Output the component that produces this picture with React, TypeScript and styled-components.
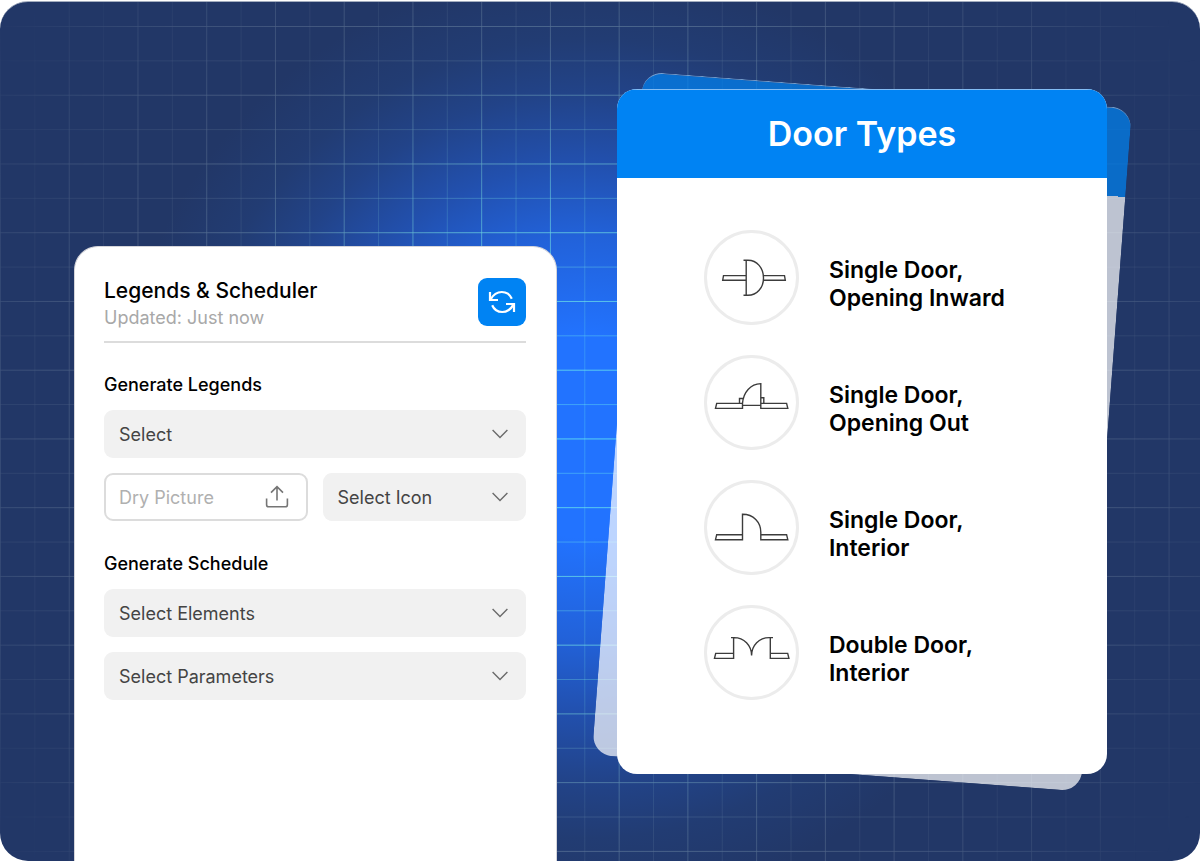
import React from "react";
import styled, { createGlobalStyle } from "styled-components";

const Global = createGlobalStyle`
  *, *::before, *::after { box-sizing: border-box; }
  body { margin: 0; background: #fff; font-family: Inter, "Liberation Sans", sans-serif; color: #000; }
  h1, h2, h3, p, ul { margin: 0; padding: 0; }
  #root { display: flow-root; }
`;

const Scene = styled.main`
  position: relative;
  margin-top: 1px;
  min-height: calc(100vh - 1px);
  overflow: hidden;
  border-radius: 28px;
  border-top: 1px solid #a3adbf;
  background: radial-gradient(
    circle at 585px 436px,
    #2273ff 0,
    #2273ff 100px,
    #2262da 200px,
    #2250ae 275px,
    #224388 345px,
    #223c73 400px,
    #223767 470px
  );
  display: grid;
  grid-template-columns: 483fr 490fr;
  column-gap: 60px;
  padding: 0 93px 0 74px;
`;

const GridLines = styled.svg`
  position: absolute;
  inset: 0;
  width: 100%;
  height: 100%;
`;

const Panel = styled.section`
  position: relative;
  margin-top: 244px;
  padding: 31px 30px 30px 29px;
  background: #fff;
  border: 1px solid #d5d5da;
  border-bottom: 0;
  border-radius: 24px 24px 0 0;
`;

const PanelHeader = styled.header`
  display: flex;
  justify-content: space-between;
  height: 65px;
  margin-bottom: -1px;
  border-bottom: 2px solid #dcdcdc;
`;

const PanelTitle = styled.h2`
  font-size: 21px;
  font-weight: 500;
  line-height: 25px;
`;

const Updated = styled.p`
  font-size: 18px;
  line-height: 29px;
  color: #a8a8a8;
`;

const RefreshButton = styled.button`
  width: 48px;
  height: 48px;
  padding: 0;
  border: 0;
  border-radius: 9px;
  background: #0083f3;
  display: grid;
  place-items: center;
`;

const Group = styled.section`
  margin-top: 31px;
  display: grid;
  grid-template-columns: 1fr 1fr;
  gap: 15px;
`;

const GroupTitle = styled.h3`
  grid-column: 1 / -1;
  font-size: 18px;
  font-weight: 500;
  line-height: 24px;
  && { margin-bottom: -2px; }
`;

const Field = styled.div<{ $wide?: boolean }>`
  position: relative;
  height: 48px;
  grid-column: ${(p) => (p.$wide ? "1 / -1" : "auto")};
  svg { position: absolute; right: 18px; top: 19px; pointer-events: none; }
`;

const Select = styled.select`
  appearance: none;
  width: 100%;
  height: 100%;
  padding: 0 48px 0 15px;
  border: 0;
  border-radius: 9px;
  background: #f1f1f1;
  font: 400 18px Inter, sans-serif;
  color: #444;
`;

const Upload = styled.button`
  height: 48px;
  padding: 0 17px 0 13px;
  display: flex;
  align-items: center;
  justify-content: space-between;
  border: 2px solid #dcdcdc;
  border-radius: 9px;
  background: #fff;
  font: 400 18px Inter, sans-serif;
  color: #b0b0b0;
`;

const Stack = styled.div`
  position: relative;
  align-self: start;
  margin-top: 87px;
`;

const BackCard = styled.div`
  position: absolute;
  inset: 0;
  border-radius: 20px;
  transform: rotate(4.3deg);
  opacity: 0.7;
  background: linear-gradient(#0083f3 88px, #fff 88px);
  border-top: 1px solid #9bcbf6;
`;

const Card = styled.section`
  position: relative;
  padding-bottom: 69px;
  border-radius: 20px;
  overflow: hidden;
  background: #fff;
`;

const CardTitle = styled.h1`
  height: 89px;
  border-top: 1px solid #83bdf5;
  background: #0083f3;
  color: #fff;
  font-size: 34px;
  font-weight: 600;
  line-height: 88px;
  text-align: center;
`;

const DoorList = styled.ul`
  list-style: none;
  && { padding: 52px 20px 5px 87px; }
  display: grid;
  gap: 30px;
`;

const Door = styled.li`
  display: flex;
  align-items: center;
  gap: 30px;
  height: 95px;
`;

const DoorIcon = styled.svg`
  flex: none;
  width: 95px;
  height: 95px;
  border: 3px solid #ececec;
  border-radius: 50%;
  fill: none;
  stroke: #3c3c3c;
  stroke-width: 1.4;
`;

const DoorName = styled.p`
  && { padding-top: 13px; }
  font-size: 23px;
  font-weight: 600;
  line-height: 28px;
`;

const PITCH = 34.37;

function BackgroundGrid() {
  return (
    <GridLines aria-hidden="true">
      <defs>
        <radialGradient id="fade" gradientUnits="userSpaceOnUse" cx="585" cy="434" r="720">
          <stop offset="0" stopColor="#fff" />
          <stop offset="0.3" stopColor="#fff" stopOpacity="0.85" />
          <stop offset="0.5" stopColor="#fff" stopOpacity="0.45" />
          <stop offset="0.8" stopColor="#fff" stopOpacity="0.24" />
          <stop offset="1" stopColor="#fff" stopOpacity="0" />
        </radialGradient>
        <radialGradient id="ink" gradientUnits="userSpaceOnUse" cx="585" cy="434" r="500">
          <stop offset="0" stopColor="#6af0f0" />
          <stop offset="0.5" stopColor="#7be6e0" />
          <stop offset="0.8" stopColor="#a4c4cc" />
          <stop offset="1" stopColor="#a9bcc8" />
        </radialGradient>
        <mask id="glow" maskUnits="userSpaceOnUse" x="0" y="0" width="4000" height="4000">
          <rect width="4000" height="4000" fill="url(#fade)" />
        </mask>
      </defs>
      <g stroke="url(#ink)" strokeWidth="1" mask="url(#glow)">
        {Array.from({ length: 70 }, (_, i) => (
          <line key={`v${i}`} x1={0.5 + i * PITCH} x2={0.5 + i * PITCH} y1="0" y2="3000" opacity={i % 2 ? 0.28 : 0.66} />
        ))}
        {Array.from({ length: 70 }, (_, i) => (
          <line key={`h${i}`} x1="0" x2="3000" y1={24.5 + i * PITCH} y2={24.5 + i * PITCH} opacity={i % 2 ? 0.4 : 0.76} />
        ))}
      </g>
    </GridLines>
  );
}

function Dropdown({ label, wide }: { label: string; wide?: boolean }) {
  return (
    <Field $wide={wide}>
      <Select aria-label={label}>
        <option>{label}</option>
      </Select>
      <svg width="16" height="10" viewBox="0 0 16 10" fill="none" stroke="#6b6b6b" strokeWidth="1.4">
        <path d="M.6 1 8 8.6 15.4 1" />
      </svg>
    </Field>
  );
}

const doors = [
  {
    name: ["Single Door,", "Opening Inward"],
    art: (
      <path d="M37.5 27.2H42c9 0 15.5 8 15.5 17.7S51 62.3 42 62.3h-4.5M40.2 27.2v35.1M40.2 42.6H17.5l-.8 4.6h23.5M57.5 42.6h21l.8 4.6H57.5" />
    ),
  },
  {
    name: ["Single Door,", "Opening Out"],
    art: (
      <path d="M36.5 45.4H10.7l-1.2 5h27Zm18.3 0h25.8l1.2 5h-27ZM36.5 45.4c.8-11 8-19.6 18.3-19.8v19.8M36.5 47.4h18.3M36.5 45.4h-3V40.5h4M54.8 39.8h3v5.1" />
    ),
  },
  {
    name: ["Single Door,", "Interior"],
    art: (
      <path d="M36.5 51.7H10.7l-1.2 5h27V31.3c11 0 18.3 8 18.3 18v7.4h27l-1.2-5H54.8" />
    ),
  },
  {
    name: ["Double Door,", "Interior"],
    art: (
      <path d="M27.6 45.4H9.7l-1.2 5h19.1V29.8M25 29.6h3c10 0 17.6 8 17.6 18 0-10 7.6-18 17.6-18H67M64.3 29.8v20.6h18.6l-1.2-5H64.3" />
    ),
  },
];

export default function App() {
  return (
    <>
      <Global />
      <Scene>
        <BackgroundGrid />
        <Panel>
          <PanelHeader>
            <div>
              <PanelTitle>Legends &amp; Scheduler</PanelTitle>
              <Updated>Updated: Just now</Updated>
            </div>
            <RefreshButton aria-label="Refresh">
              <svg width="28" height="24" viewBox="0 0 28 24" fill="none" stroke="#fff" strokeWidth="2.2">
                <path d="M2 2v8h8M2.6 9.4C5.6 4 9.2 2 13.8 2c4.6 0 8.2 2.6 10 6.8M26 22v-8h-8M25.4 14.6C22.4 20 18.8 22 14.2 22c-4.6 0-8.2-2.6-10-6.8" />
              </svg>
            </RefreshButton>
          </PanelHeader>
          <Group>
            <GroupTitle>Generate Legends</GroupTitle>
            <Dropdown label="Select" wide />
            <Upload>
              Dry Picture
              <svg width="24" height="24" viewBox="0 0 24 24" fill="none" stroke="#757575" strokeWidth="1.6">
                <path d="M1.6 13.5v6.2c0 1.2.9 2.1 2.1 2.1h16.6c1.2 0 2.1-.9 2.1-2.1v-6.2M12 15.5V2M6 7.6l6-6 6 6" />
              </svg>
            </Upload>
            <Dropdown label="Select Icon" />
          </Group>
          <Group>
            <GroupTitle>Generate Schedule</GroupTitle>
            <Dropdown label="Select Elements" wide />
            <Dropdown label="Select Parameters" wide />
          </Group>
        </Panel>
        <Stack>
          <BackCard />
          <Card>
            <CardTitle>Door Types</CardTitle>
            <DoorList>
              {doors.map((door) => (
                <Door key={door.name.join(" ")}>
                  <DoorIcon viewBox="1 0 89 89" aria-hidden="true">{door.art}</DoorIcon>
                  <DoorName>
                    {door.name[0]}
                    <br />
                    {door.name[1]}
                  </DoorName>
                </Door>
              ))}
            </DoorList>
          </Card>
        </Stack>
      </Scene>
    </>
  );
}
